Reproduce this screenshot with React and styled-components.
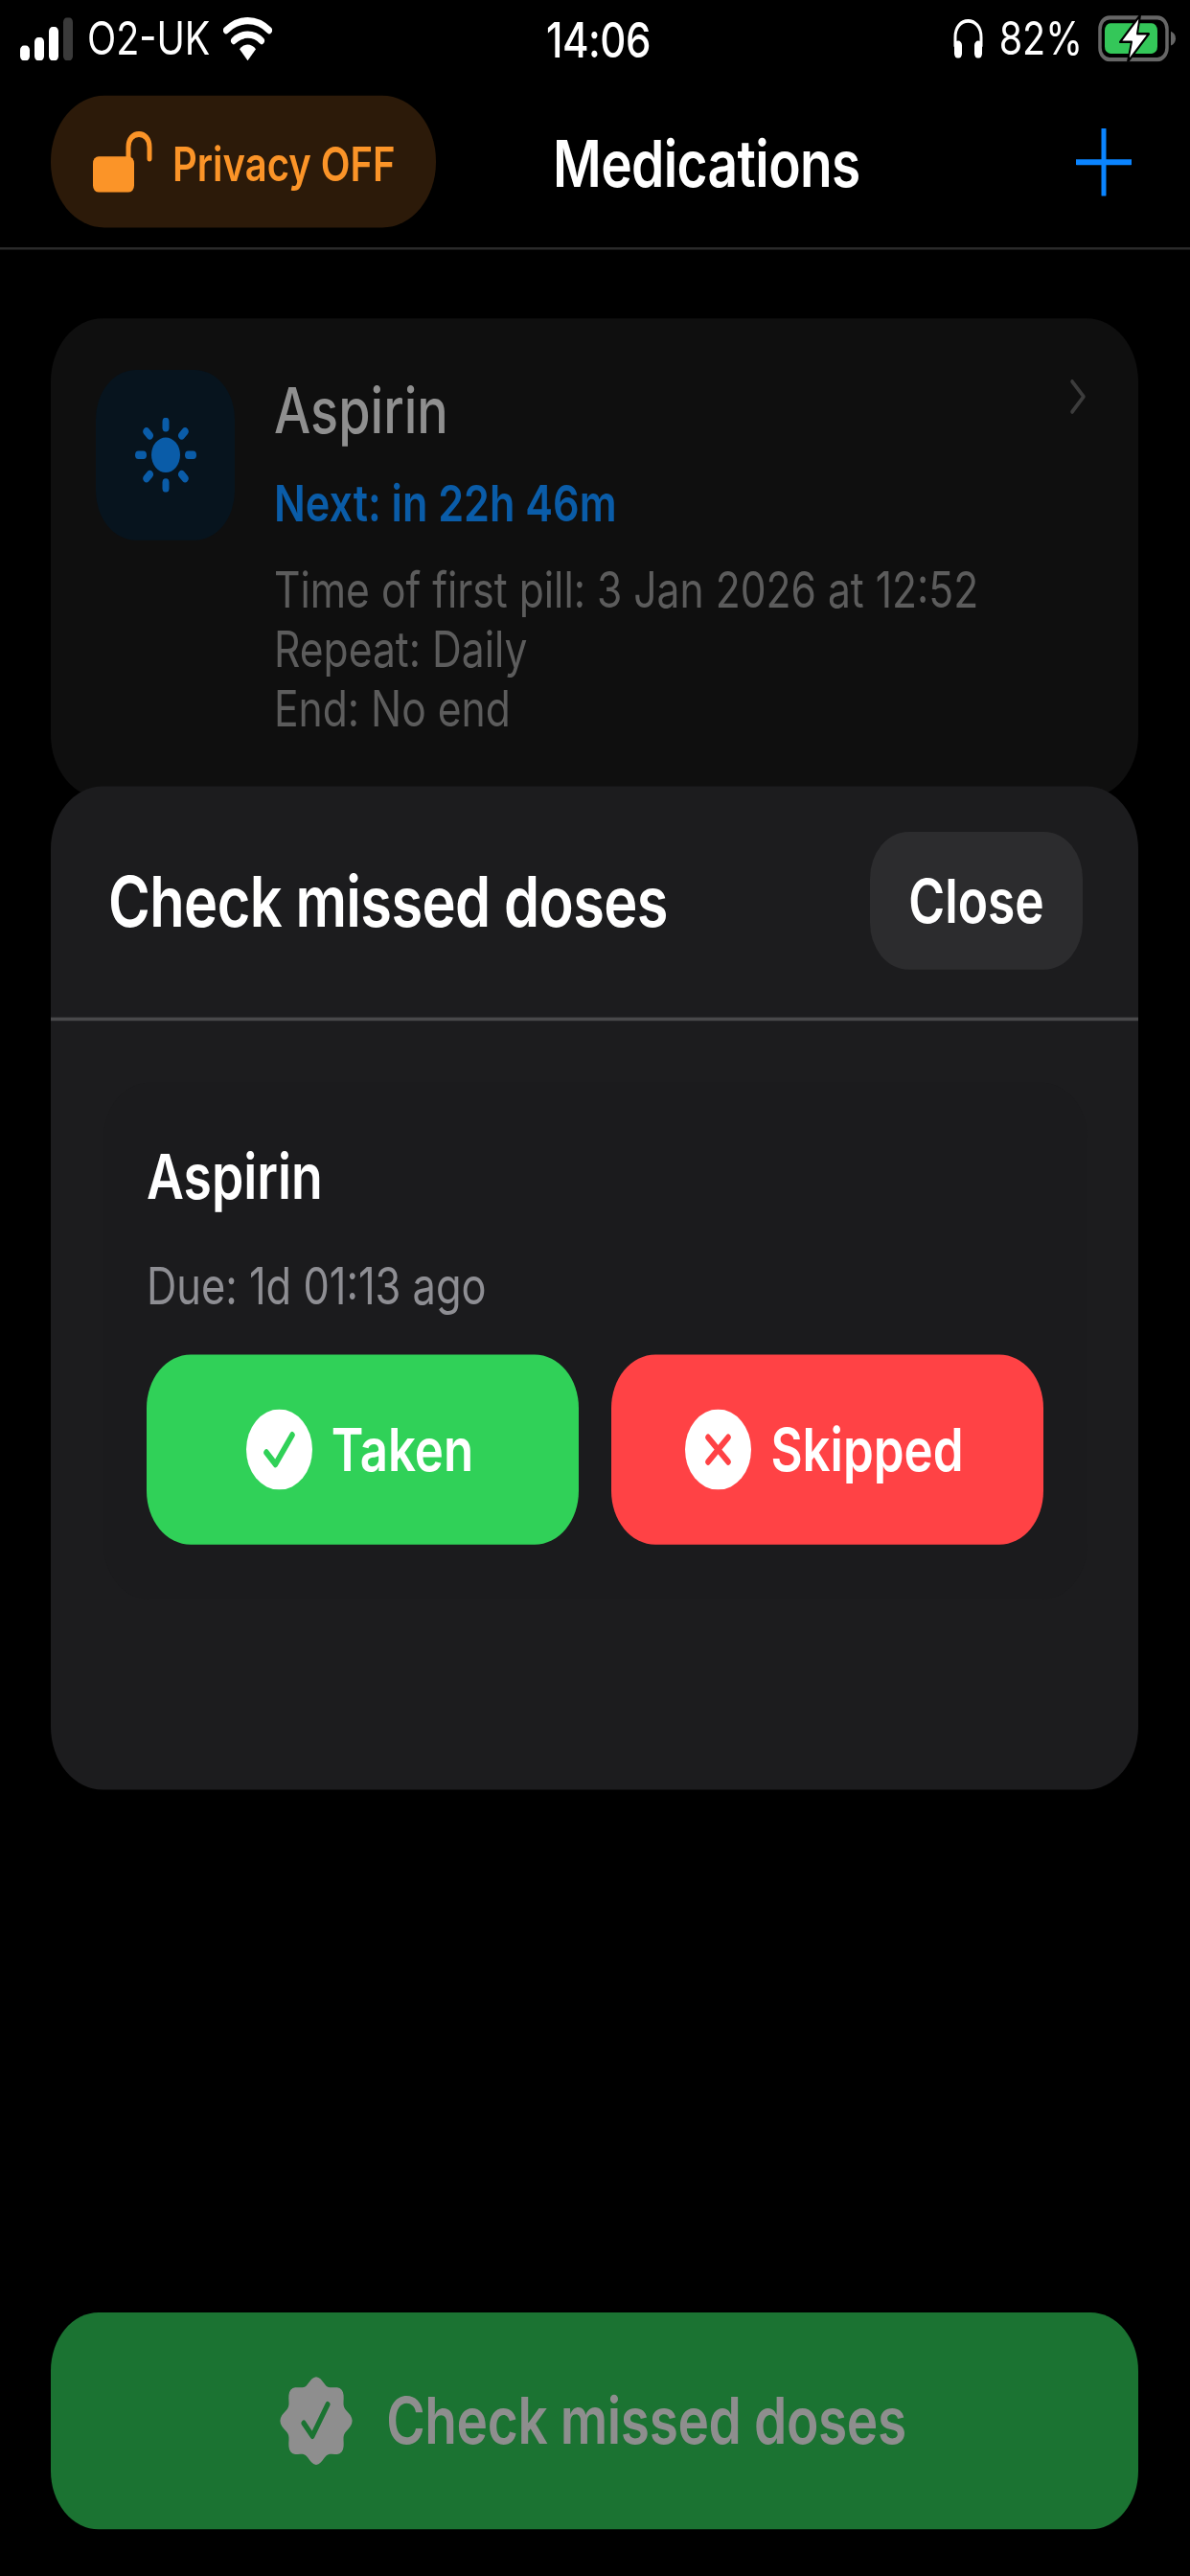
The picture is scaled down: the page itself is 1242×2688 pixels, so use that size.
import React from "react";
import styled, { createGlobalStyle } from "styled-components";

const Global = createGlobalStyle`
  html, body, #root { margin: 0; padding: 0; background: #000; height: 2688px; }
  * { box-sizing: border-box; }
`;

/* The screenshot is a 1242x2208 capture stretched vertically to 2688. */
const Stage = styled.div`
  position: relative;
  width: 1242px;
  height: 2208px;
  display: flex;
  flex-direction: column;
  background: #000;
  transform: scaleY(1.2174);
  transform-origin: top left;
  font-family: Inter, "Liberation Sans", sans-serif;
  filter: blur(0.6px);
`;

const StatusBar = styled.div`
  height: 66px;
  padding: 0 14px 0 21px;
  display: grid;
  grid-template-columns: 1fr auto 1fr;
  align-items: center;
  color: #fff;
  font-size: 39.5px;
  flex: none;
`;
const StatusGroup = styled.div`
  display: flex;
  align-items: center;
  gap: ${(p) => p.$gap || 14}px;
  justify-content: ${(p) => (p.$end ? "flex-end" : "flex-start")};
`;
const Clock = styled.div`
  font-weight: 500;
  font-size: 42px;
  letter-spacing: -0.5px;
`;
const Header = styled.header`
  height: 148px;
  flex: none;
  padding: 16px 61px 17px 53px;
  display: flex;
  align-items: center;
  border-bottom: 2px solid #2b2b2b;
`;
const PrivacyPill = styled.div`
  width: 402px;
  height: 113px;
  border-radius: 56px;
  background: #2c1a09;
  color: #fb9428;
  display: flex;
  align-items: center;
  gap: 20px;
  padding-left: 44px;
  font-size: 40px;
  font-weight: 600;
`;
const PillLabel = styled.span`
  padding-top: 3px;
`;
const Title = styled.h1`
  margin: 0 0 0 122px;
  padding-top: 3px;
  color: #fff;
  font-size: 55px;
  font-weight: 600;
  letter-spacing: -0.6px;
`;
const PlusIcon = styled.svg`
  margin-left: auto;
  width: 58px;
  height: 58px;
  display: block;
`;
const MedCard = styled.section`
  margin: 59px 54px 0 53px;
  height: 411px;
  flex: none;
  padding: 44px 47px 0;
  border-radius: 54px;
  background: #0f0f0f;
  display: flex;
  gap: 41px;
`;
const MedIcon = styled.div`
  width: 145px;
  height: 146px;
  border-radius: 42px;
  background: #07141e;
  flex: none;
  display: flex;
  align-items: center;
  justify-content: center;
`;
const MedBody = styled.div`
  flex: 1;
  padding-top: 5px;
`;
const MedName = styled.div`
  color: #8f8f8f;
  font-size: 54px;
  font-weight: 500;
  line-height: 60px;
`;
const NextDose = styled.div`
  margin-top: 24px;
  color: #0a5ca8;
  font-size: 43.2px;
  font-weight: 600;
  line-height: 50px;
`;
const Details = styled.div`
  margin-top: 24px;
  color: #5c5c5c;
  font-size: 42.6px;
  line-height: 51px;
`;
const Chevron = styled.svg`
  width: 18px;
  height: 30px;
  margin: 8px 7px 0 0;
  flex: none;
`;
const Sheet = styled.section`
  position: absolute;
  top: 674px;
  left: 53px;
  width: 1135px;
  height: 860px;
  border-radius: 54px;
  background: #1c1c1e;
`;
const SheetHeader = styled.div`
  height: 201px;
  padding: 0 58px 3px 60px;
  display: flex;
  align-items: center;
  justify-content: space-between;
  border-bottom: 3px solid #48484a;
`;
const SheetTitle = styled.h2`
  margin: 0;
  color: #fff;
  font-size: 59.5px;
  font-weight: 600;
  letter-spacing: -0.6px;
`;
const CloseButton = styled.button`
  width: 222px;
  height: 118px;
  border: 0;
  border-radius: 40px;
  background: #2c2c2e;
  color: #fff;
  font: 600 51.5px Inter, "Liberation Sans", sans-serif;
`;
const MissedCard = styled.div`
  margin: 53px 53px 0 55px;
  padding: 51px 46px 47px 45px;
  border-radius: 48px;
  background: #1b1b1d;
`;
const MissedName = styled.div`
  color: #fff;
  font-size: 53.5px;
  font-weight: 600;
  line-height: 60px;
`;
const DueText = styled.div`
  margin-top: 38px;
  color: #8e8e93;
  font-size: 43.4px;
  line-height: 50px;
`;
const Actions = styled.div`
  margin-top: 34px;
  display: grid;
  grid-template-columns: 1fr 1fr;
  gap: 34px;
`;
const ActionButton = styled.button`
  height: 163px;
  border: 0;
  border-radius: 46px;
  background: ${(p) => p.$bg};
  color: #fff;
  display: flex;
  align-items: center;
  justify-content: center;
  gap: 20px;
  padding: 0 6px 0 0;
  font: 600 51px Inter, "Liberation Sans", sans-serif;
`;
const CheckButton = styled.button`
  margin: auto 54px 40px 53px;
  flex: none;
  height: 186px;
  border: 0;
  border-radius: 50px;
  padding: 0 3px 0 0;
  background: #1b7332;
  color: #8e8e8e;
  display: flex;
  align-items: center;
  justify-content: center;
  gap: 35px;
  font: 600 55px Inter, "Liberation Sans", sans-serif;
  letter-spacing: -0.4px;
`;

const Signal = () => (
  <svg width="56" height="37" viewBox="0 0 56 37">
    <rect x="0" y="24" width="10" height="13" rx="4" fill="#fff" />
    <rect x="15" y="17" width="10" height="20" rx="4" fill="#fff" />
    <rect x="30" y="8" width="10" height="29" rx="4" fill="#fff" />
    <rect x="45" y="0" width="10" height="37" rx="4" fill="#3a3a3a" />
  </svg>
);
const Wifi = () => (
  <svg width="51" height="38" viewBox="0 0 51 38" fill="none">
    <path d="M3 12C16 1 35 1 48 12" stroke="#fff" strokeWidth="6" strokeLinecap="round" />
    <path d="M11 21C19 14 32 14 40 21" stroke="#fff" strokeWidth="6" strokeLinecap="round" />
    <path d="M17 28C22 23 29 23 34 28L25.500 38Z" fill="#fff" />
  </svg>
);
const Headphones = () => (
  <svg width="33" height="34" viewBox="0 0 33 34" fill="none">
    <path d="M3 24V16C3 7 9 2 16.500 2S30 7 30 16V24" stroke="#fff" strokeWidth="3" />
    <rect x="2" y="19" width="8" height="15" rx="4" fill="#fff" />
    <rect x="23" y="19" width="8" height="15" rx="4" fill="#fff" />
  </svg>
);
const Battery = () => (
  <svg width="82" height="40" viewBox="0 0 82 40" fill="none">
    <rect x="2" y="2" width="70" height="36" rx="10" stroke="#666" strokeWidth="3.5" />
    <path d="M76 14c3 1 5 3 5 6s-2 5-5 6z" fill="#666" />
    <rect x="7" y="7" width="55" height="26" rx="6" fill="#34c759" />
    <path d="M44 0L23 23H35L31 40L53 16H41Z" fill="#fff" stroke="#000" strokeWidth="2" strokeLinejoin="round" />
  </svg>
);
const OpenLock = () => (
  <svg width="63" height="53" viewBox="0 0 63 53" fill="none">
    <path d="M37 26V14C37 7 42 3 48 3S59 7 59 14V24" stroke="#fb9428" strokeWidth="5" strokeLinecap="round" />
    <rect x="0" y="22" width="43" height="31" rx="6" fill="#fb9428" />
  </svg>
);
const Sun = () => (
  <svg width="64" height="64" viewBox="0 0 64 64" fill="#0a5ca8">
    <circle cx="32" cy="32" r="15" />
    {[0, 45, 90, 135, 180, 225, 270, 315].map((a) => (
      <rect key={a} x="28.500" y="0" width="7" height="12" rx="3.500" transform={`rotate(${a} 32 32)`} />
    ))}
  </svg>
);
const CircleCheck = () => (
  <svg width="69" height="69" viewBox="0 0 69 69" fill="none">
    <circle cx="34.500" cy="34.500" r="34.500" fill="#fff" />
    <path d="M21 37L30.500 47L48 22" stroke="#30d158" strokeWidth="5.500" strokeLinecap="round" strokeLinejoin="round" />
  </svg>
);
const CircleCross = () => (
  <svg width="69" height="69" viewBox="0 0 69 69" fill="none">
    <circle cx="34.500" cy="34.500" r="34.500" fill="#fff" />
    <path d="M24 24L45 45M45 24L24 45" stroke="#ff4245" strokeWidth="5.500" strokeLinecap="round" />
  </svg>
);
const sealPoints = Array.from({ length: 96 }, (_, i) => {
  const t = (i / 96) * Math.PI * 2;
  const r = 34.5 * (1 + 0.09 * Math.cos(8 * t));
  return `${(38 + r * Math.sin(t)).toFixed(2)},${(38 - r * Math.cos(t)).toFixed(2)}`;
}).join(" ");
const Seal = () => (
  <svg width="76" height="76" viewBox="0 0 76 76" fill="none">
    <polygon points={sealPoints} fill="#8e8e8e" />
    <path d="M25 40L34 51L50 24" stroke="#1b7332" strokeWidth="5" strokeLinecap="round" strokeLinejoin="round" />
  </svg>
);

export default function App() {
  return (
    <>
      <Global />
      <Stage>
        <StatusBar>
          <StatusGroup>
            <Signal />
            <span>O2-UK</span>
            <Wifi />
          </StatusGroup>
          <Clock>14:06</Clock>
          <StatusGroup $end $gap={16}>
            <Headphones />
            <span>82%</span>
            <Battery />
          </StatusGroup>
        </StatusBar>
        <Header>
          <PrivacyPill>
            <OpenLock />
            <PillLabel>Privacy OFF</PillLabel>
          </PrivacyPill>
          <Title>Medications</Title>
          <PlusIcon viewBox="0 0 58 58">
            <path d="M29 1V57M1 29H57" stroke="#0a84ff" strokeWidth="5" strokeLinecap="round" />
          </PlusIcon>
        </Header>
        <MedCard>
          <MedIcon>
            <Sun />
          </MedIcon>
          <MedBody>
            <MedName>Aspirin</MedName>
            <NextDose>Next: in 22h 46m</NextDose>
            <Details>
              Time of first pill: 3 Jan 2026 at 12:52
              <br />
              Repeat: Daily
              <br />
              End: No end
            </Details>
          </MedBody>
          <Chevron viewBox="0 0 18 30" fill="none">
            <path d="M3 2L15 15L3 28" stroke="#3c3c3c" strokeWidth="3.500" strokeLinecap="round" strokeLinejoin="round" />
          </Chevron>
        </MedCard>
        <Sheet>
          <SheetHeader>
            <SheetTitle>Check missed doses</SheetTitle>
            <CloseButton>Close</CloseButton>
          </SheetHeader>
          <MissedCard>
            <MissedName>Aspirin</MissedName>
            <DueText>Due: 1d 01:13 ago</DueText>
            <Actions>
              <ActionButton $bg="#30d158">
                <CircleCheck />
                Taken
              </ActionButton>
              <ActionButton $bg="#ff4245">
                <CircleCross />
                Skipped
              </ActionButton>
            </Actions>
          </MissedCard>
        </Sheet>
        <CheckButton>
          <Seal />
          Check missed doses
        </CheckButton>
      </Stage>
    </>
  );
}
